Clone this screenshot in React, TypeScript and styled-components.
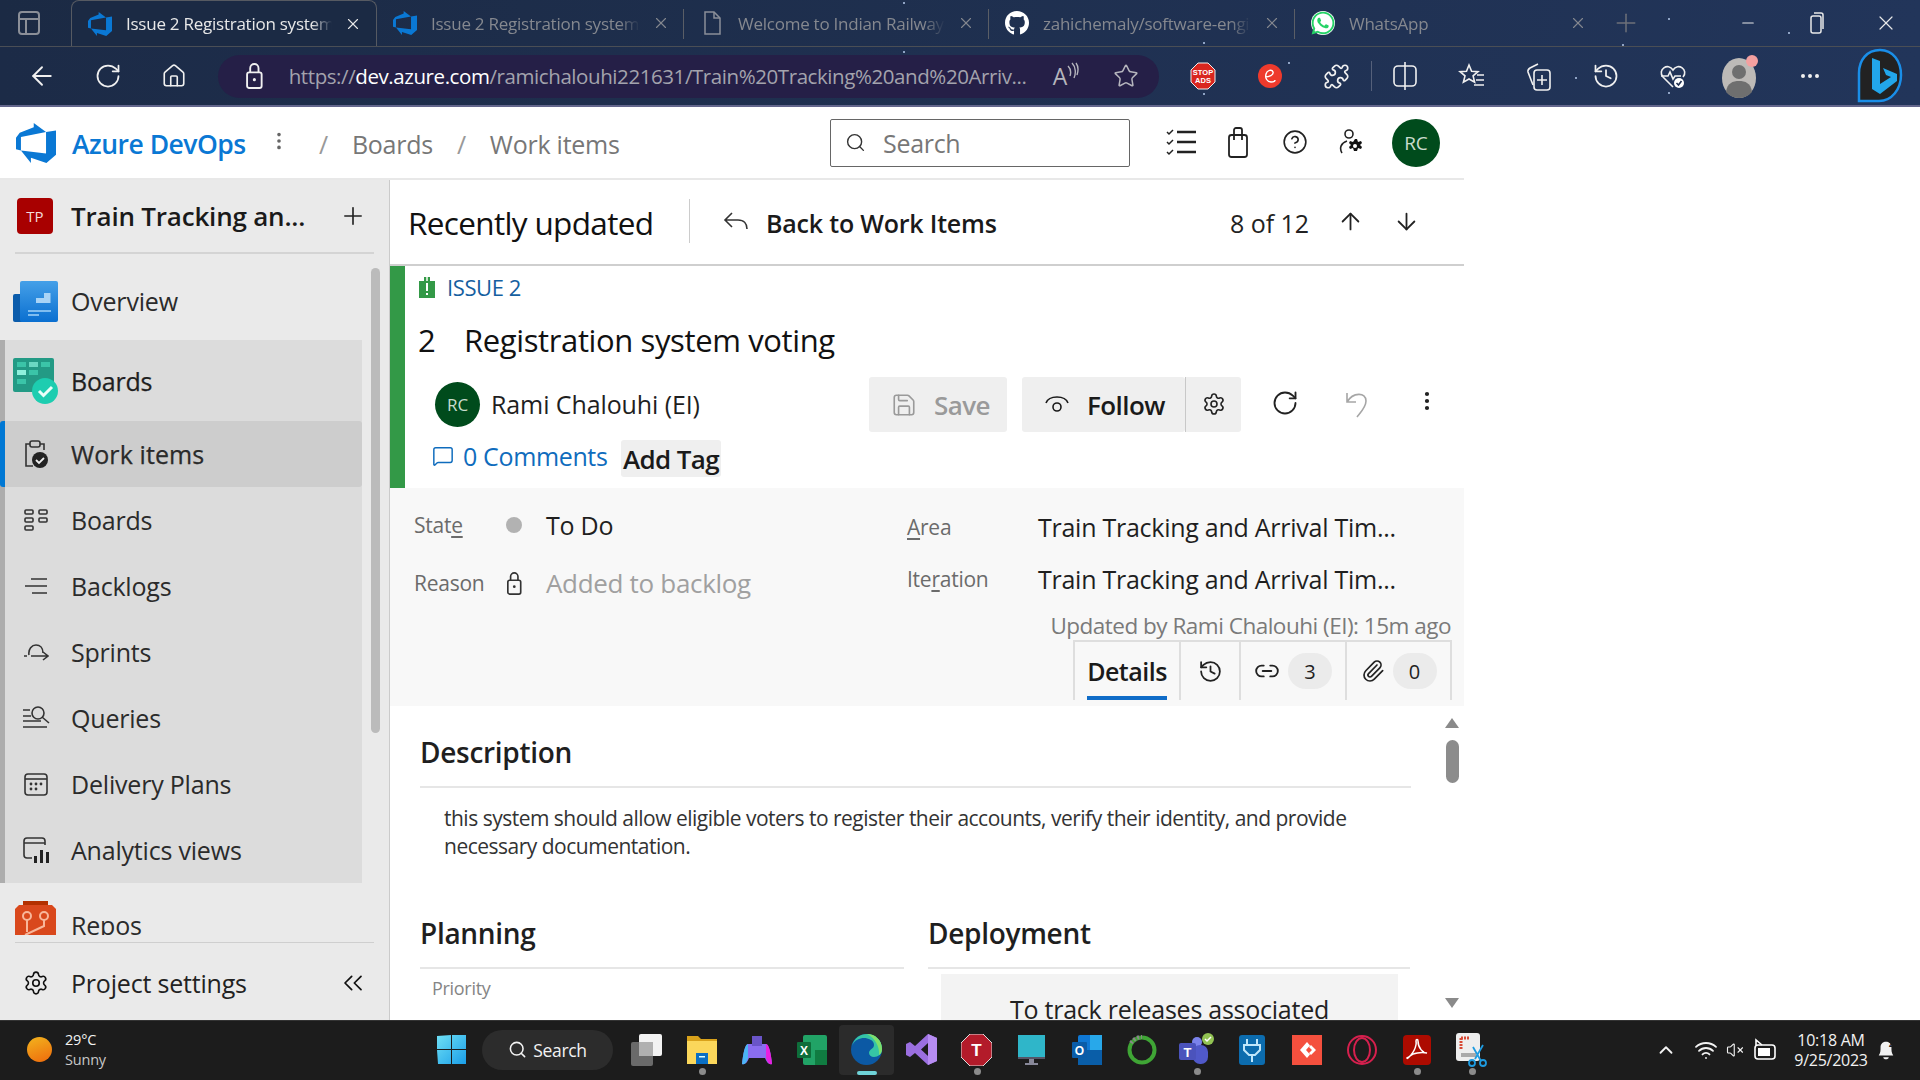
import styled, { createGlobalStyle } from "styled-components";
import {
  ArrowDown, ArrowLeft, ArrowUp, ChevronUp, ChevronsLeft, CircleHelp, Ellipsis, EllipsisVertical, History, Home,
  Link2, MessageSquare, Minus, Paperclip, Plus, Puzzle, RotateCw, Save, Search, Settings,
  Star, VolumeX, Wifi, X,
} from "lucide-react";
import { FaGithub, FaWhatsapp } from "react-icons/fa";

const FONT = `"Open Sans", "Noto Sans", sans-serif`;

const speck = (x: number, y: number) => `radial-gradient(circle 1.5px at ${x}px ${y}px, #8fa3c4 60%, transparent 100%)`;

const Global = createGlobalStyle`
  html, body { margin: 0; padding: 0; background: #fff; }
  body { font-family: ${FONT}; overflow: hidden; }
  * { box-sizing: border-box; }
`;

const Page = styled.div`
  width: 1920px;
  height: 1080px;
  display: flex;
  flex-direction: column;
  overflow: hidden;
`;

/* browser chrome */
const TabStrip = styled.div`
  height: 47px;
  display: flex;
  align-items: flex-end;
  background: ${[speck(904, 3), speck(1204, 43), speck(1623, 45), speck(1789, 33), speck(1669, 19)].join(",")}, linear-gradient(90deg, #1b2a44, #22355a);
  border-bottom: 1px solid #4a4e55;
  color: #e6e6e6;
`;
const TabLead = styled.div`
  width: 71px;
  height: 46px;
  display: flex;
  align-items: center;
  justify-content: center;
  padding-right: 14px;
  color: #8b8f98;
`;
const Tab = styled.div<{ $active?: boolean; $w: number; $sep?: boolean }>`
  width: ${(p) => p.$w}px;
  height: 46px;
  display: flex;
  align-items: center;
  padding: 0 14px 0 16px;
  position: relative;
  color: ${(p) => (p.$active ? "#e8e8e8" : "#85888f")};
  ${(p) => p.$active && "border: 1px solid #565a62; border-bottom: none; border-radius: 8px 8px 0 0; background: #1b2a44;"}
  ${(p) => p.$sep && "&::after { content: ''; position: absolute; right: 0; top: 9px; height: 30px; width: 1px; background: #5a5e66; }"}
`;
const TabIcon = styled.span`
  width: 24px;
  height: 28px;
  display: flex;
  align-items: center;
  justify-content: center;
  flex: none;
`;
const TabTitle = styled.span`
  flex: 1;
  margin: 0 12px 0 14px;
  font-size: 17px;
  white-space: nowrap;
  overflow: hidden;
  letter-spacing: -0.25px;
  mask-image: linear-gradient(to right, #000 90%, transparent);
`;
const NewTab = styled.div`
  width: 50px;
  height: 46px;
  display: flex;
  align-items: center;
  justify-content: center;
  color: #6d7079;
`;
const WindowButtons = styled.div`
  margin-left: auto;
  display: flex;
  color: #e8e8e8;
`;
const WindowButton = styled.div`
  width: 69px;
  height: 46px;
  display: flex;
  align-items: center;
  justify-content: center;
`;
const ToolBar = styled.div`
  height: 60px;
  display: flex;
  align-items: center;
  padding-left: 9px;
  background: ${[speck(904, 5), speck(1289, 16), speck(1576, 31), speck(1669, 46), speck(1204, 47)].join(",")}, linear-gradient(90deg, #1c2b47, #22355a);
  border-bottom: 2px solid #63668c;
  color: #f0f0f0;
`;
const ToolSlot = styled.div<{ $w?: number }>`
  width: ${(p) => p.$w ?? 66}px;
  height: 44px;
  flex: none;
  display: flex;
  align-items: center;
  justify-content: center;
`;
const Address = styled.div`
  width: 941px;
  height: 43px;
  margin: 0 10px 0 11px;
  display: flex;
  align-items: center;
  border-radius: 22px;
  background: #251f47;
  color: #a3a3ad;
  padding-left: 27px;
`;
const Url = styled.div`
  width: 741px;
  margin-left: 25px;
  font-size: 20.5px;
  letter-spacing: -0.42px;
  white-space: nowrap;
  overflow: hidden;
  b { font-weight: 400; color: #fff; }
`;
const ReadAloud = styled.span`
  width: 42px;
  margin-left: 23px;
  display: flex;
  align-items: flex-start;
  font-size: 23px;
  line-height: 28px;
  color: #b5b5bd;
`;
const AddressEnd = styled.div`
  width: 62px;
  display: flex;
  justify-content: center;
  color: #b5b5bd;
`;
const ToolSep = styled.div`
  width: 1px;
  height: 30px;
  background: #55607a;
  margin-left: 1px;
  margin-right: -1px;
`;

/* app header */
const AppFrame = styled.div`
  width: 1464px;
  height: 913px;
  display: flex;
  flex-direction: column;
  background: #fff;
`;
const AppHeader = styled.header`
  height: 73px;
  flex: none;
  display: flex;
  align-items: center;
  border-bottom: 2px solid #e8e8e8;
  padding: 0 24px 0 16px;
`;
const Brand = styled.div`
  margin: 2px 0 0 16px;
  font-size: 26.5px;
  font-weight: 600;
  color: #0a78d4;
  letter-spacing: -0.5px;
  width: 191px;
`;
const Dots = styled.div`
  width: 32px;
  display: flex;
  justify-content: center;
  color: #666;
  margin-bottom: 4px;
`;
const Crumb = styled.span<{ $sep?: boolean }>`
  font-size: 25px;
  letter-spacing: -0.25px;
  color: ${(p) => (p.$sep ? "#999" : "#777")};
  margin: 2px 0 0 24px;
`;
const SearchBox = styled.div`
  width: 300px;
  height: 48px;
  margin-left: auto;
  border: 1px solid #666;
  border-radius: 2px;
  display: flex;
  align-items: center;
  padding-left: 14px;
  color: #333;
  span { margin-left: 17px; padding-top: 1px; font-size: 25px; color: #777; letter-spacing: -0.3px; }
`;
const HeaderIcons = styled.div`
  display: flex;
  align-items: center;
  margin: 0 12px 2px 22px;
  color: #222;
`;
const HeaderSlot = styled.div`
  width: 57px;
  display: flex;
  justify-content: center;
`;
const Avatar = styled.div<{ $size: number; $font: number }>`
  width: ${(p) => p.$size}px;
  height: ${(p) => p.$size}px;
  border-radius: 50%;
  background: #004b1c;
  color: #c9dccd;
  font-size: ${(p) => p.$font}px;
  display: flex;
  align-items: center;
  justify-content: center;
  flex: none;
`;
const Body = styled.div`
  flex: 1;
  min-height: 0;
  display: flex;
`;

/* left nav */
const Sidebar = styled.aside`
  width: 390px;
  flex: none;
  position: relative;
  background: #eaeaea;
  border-right: 1px solid #cbcbcb;
  display: flex;
  flex-direction: column;
`;
const Project = styled.div`
  height: 72px;
  display: flex;
  align-items: center;
  padding: 0 22px 0 17px;
  flex: none;
`;
const ProjectBadge = styled.div`
  width: 36px;
  height: 36px;
  border-radius: 4px;
  background: #a80000;
  color: #f3dcdc;
  font-size: 15px;
  display: flex;
  align-items: center;
  justify-content: center;
`;
const ProjectName = styled.div`
  flex: 1;
  margin-left: 18px;
  font-size: 26px;
  font-weight: 600;
  letter-spacing: -0.2px;
  color: #1a1a1a;
`;
const NavRule = styled.div<{ $h: number; $gap?: number }>`
  height: ${(p) => p.$h}px;
  margin: ${(p) => p.$gap ?? 0}px 15px 0;
  background: ${(p) => (p.$h > 1 ? "#d4d4d4" : "#cfcfcf")};
  flex: none;
`;
const NavClip = styled.nav`
  height: 681px;
  flex: none;
  overflow: hidden;
`;
const NavRow = styled.div<{ $h: number; $pad?: number; $selected?: boolean; $inGroup?: boolean; $strong?: boolean }>`
  height: ${(p) => p.$h}px;
  display: flex;
  align-items: center;
  padding: ${(p) => p.$pad ?? 0}px 0 0 ${(p) => (p.$inGroup ? 8 : 13)}px;
  font-size: 25px;
  letter-spacing: -0.2px;
  color: #2b2b2b;
  ${(p) => p.$strong && "color:#1f1f1f; -webkit-text-stroke: 0.25px #1f1f1f;"}
  ${(p) => p.$selected && "background:#cdcdcd; border-left:5px solid #0078d4; margin-left:-5px; padding-left:8px; border-radius:3px; letter-spacing:0.1px; -webkit-text-stroke:0.25px #1f1f1f;"}
`;
const NavIcon = styled.span<{ $big?: boolean }>`
  width: 58px;
  flex: none;
  display: flex;
  justify-content: ${(p) => (p.$big ? "flex-start" : "center")};
  padding-right: ${(p) => (p.$big ? 0 : 13)}px;
  color: #333;
`;
const NavGroup = styled.div`
  width: 362px;
  background: #dcdcdc;
  border-left: 5px solid #adadad;
`;
const NavThumb = styled.div`
  position: absolute;
  left: 371px;
  top: 88px;
  width: 9px;
  height: 465px;
  background: #bbb;
  border-radius: 5px;
`;
const SettingsRow = styled(NavRow)`
  flex: 1;
  padding-right: 20px;
  padding-top: 2px;
  color: #222;
  span:nth-child(2) { flex: 1; }
`;

/* main */
const Main = styled.main`
  flex: 1;
  min-width: 0;
  display: flex;
  flex-direction: column;
`;
const TopRow = styled.div`
  height: 86px;
  flex: none;
  display: flex;
  align-items: center;
  padding: 0 44px 2px 18px;
  border-bottom: 2px solid #cfcfcf;
`;
const PageTitle = styled.div`
  font-size: 31.5px;
  letter-spacing: -0.66px;
  color: #111;
  width: 281px;
  padding-top: 2px;
`;
const VSep = styled.div`
  width: 1px;
  height: 44px;
  background: #ccc;
`;
const BackIcon = styled.span`
  margin-left: 33px;
  display: flex;
  color: #333;
`;
const BackText = styled.span`
  margin-left: 17px;
  font-size: 25px;
  font-weight: 600;
  letter-spacing: -0.2px;
  color: #1a1a1a;
  padding-top: 3px;
`;
const Pager = styled.div`
  margin-left: auto;
  display: flex;
  align-items: center;
  gap: 25px;
  color: #222;
  span { font-size: 25px; letter-spacing: -0.05px; margin-right: 3px; padding-top: 3px; }
  svg + svg { margin-left: 4px; }
`;
const WorkHead = styled.section`
  height: 222px;
  flex: none;
  border-left: 15px solid #339947;
  padding-left: 13px;
  display: flex;
  flex-direction: column;
`;
const TypeRow = styled.div`
  height: 44px;
  padding-bottom: 2px;
  display: flex;
  align-items: center;
  gap: 11px;
  font-size: 22px;
  letter-spacing: -0.4px;
  color: #15609f;
`;
const TitleRow = styled.div`
  height: 60px;
  display: flex;
  align-items: center;
  font-size: 31px;
  letter-spacing: -0.38px;
  color: #111;
  span:first-child { width: 46px; }
`;
const ActionRow = styled.div`
  height: 56px;
  margin-top: 6px;
  padding: 0 2px 0 17px;
  display: flex;
  align-items: center;
`;
const Person = styled.span`
  margin-left: 11px;
  font-size: 25px;
  letter-spacing: -0.1px;
  color: #1f1f1f;
  margin-right: auto;
`;
const ActionButton = styled.div<{ $w: number; $muted?: boolean; $gap?: number; $left?: number }>`
  width: ${(p) => p.$w}px;
  height: 55px;
  background: #efefef;
  border-radius: 3px;
  display: flex;
  align-items: center;
  font-size: 26px;
  font-weight: 600;
  letter-spacing: -0.55px;
  color: ${(p) => (p.$muted ? "#9a9a9a" : "#1a1a1a")};
  padding: 2px 0 0 ${(p) => p.$left ?? 22}px;
  gap: ${(p) => p.$gap ?? 17}px;
`;
const FollowGroup = styled.div`
  display: flex;
  margin-left: 15px;
`;
const SplitGear = styled.div`
  width: 56px;
  height: 55px;
  background: #efefef;
  border-left: 1px solid #c8c8c8;
  border-radius: 0 3px 3px 0;
  display: flex;
  align-items: center;
  justify-content: center;
  color: #222;
`;
const ActionIcon = styled.div<{ $muted?: boolean }>`
  width: 71px;
  display: flex;
  justify-content: center;
  color: ${(p) => (p.$muted ? "#a6a6a6" : "#222")};
`;
const ActionIcons = styled.div`
  display: flex;
  margin-left: 8px;
`;
const MetaRow = styled.div`
  height: 37px;
  margin: 8px 0 0 14px;
  display: flex;
  align-items: center;
`;
const Comments = styled.div`
  display: flex;
  align-items: center;
  gap: 9px;
  width: 189px;
  margin-bottom: 5px;
  font-size: 25px;
  letter-spacing: -0.36px;
  color: #0f6cbd;
`;
const AddTag = styled.div`
  width: 100px;
  height: 37px;
  background: #efefef;
  border-radius: 3px;
  font-size: 26px;
  font-weight: 600;
  letter-spacing: -0.65px;
  color: #1a1a1a;
  display: flex;
  align-items: center;
  justify-content: center;
  white-space: nowrap;
`;
const Fields = styled.section`
  height: 218px;
  flex: none;
  background: #f8f8f8;
  padding-top: 8px;
  display: flex;
  flex-direction: column;
`;
const FieldGrid = styled.div`
  display: flex;
  padding-left: 24px;
  height: 116px;
`;
const FieldColumn = styled.div<{ $w?: number; $row: number; $top?: number }>`
  width: ${(p) => (p.$w ? `${p.$w}px` : "auto")};
  padding-top: ${(p) => p.$top ?? 0}px;
  display: grid;
  grid-auto-rows: ${(p) => p.$row}px;
`;
const Field = styled.div`
  display: flex;
  align-items: center;
  white-space: nowrap;
`;
const FieldLabel = styled.span<{ $w: number }>`
  width: ${(p) => p.$w}px;
  font-size: 21px;
  letter-spacing: -0.25px;
  color: #6b6b6b;
  flex: none;
  u { text-underline-offset: 3px; }
`;
const Marker = styled.span`
  width: 44px;
  flex: none;
  display: flex;
  justify-content: center;
  margin-right: 10px;
  color: #333;
`;
const StateDot = styled.span`
  width: 16px;
  height: 16px;
  border-radius: 50%;
  background: #b2b2b2;
`;
const FieldValue = styled.span<{ $muted?: boolean }>`
  font-size: ${(p) => (p.$muted ? 26 : 25)}px;
  letter-spacing: ${(p) => (p.$muted ? -0.32 : -0.26)}px;
  color: ${(p) => (p.$muted ? "#a0a0a0" : "#1f1f1f")};
`;
const Updated = styled.div`
  height: 28px;
  margin-right: 13px;
  text-align: right;
  font-size: 22.5px;
  letter-spacing: -0.5px;
  line-height: 28px;
  color: #7a7a7a;
  white-space: nowrap;
`;
const TabBar = styled.div`
  height: 60px;
  margin: 0 12px 0 auto;
  display: flex;
  border-top: 2px solid #dedede;
  border-left: 2px solid #dedede;
`;
const DetailTab = styled.div<{ $w: number }>`
  width: ${(p) => p.$w}px;
  border-right: 2px solid #dedede;
  display: flex;
  align-items: center;
  justify-content: center;
  gap: 8px;
  color: #222;
`;
const DetailsLabel = styled.span`
  font-size: 25px;
  font-weight: 600;
  letter-spacing: -0.5px;
  color: #1a1a1a;
  border-bottom: 4px solid #0f6cc8;
  line-height: 46px;
  margin-top: 6px;
  height: 52px;
`;
const CountBadge = styled.span`
  width: 44px;
  height: 36px;
  border-radius: 18px;
  background: #ebebeb;
  font-size: 20px;
  display: flex;
  align-items: center;
  justify-content: center;
`;
const Lower = styled.section`
  flex: 1;
  min-height: 0;
  display: flex;
`;
const Scroller = styled.div`
  width: 1050px;
  padding: 31px 29px 0 30px;
  overflow: hidden;
`;
const SectionHead = styled.h2`
  margin: 0;
  height: 51px;
  line-height: 30px;
  font-size: 28px;
  font-weight: 600;
  letter-spacing: -0.3px;
  color: #1f1f1f;
  border-bottom: 2px solid #e6e6e6;
`;
const Paragraph = styled.p`
  margin: 16px 0 58px;
  padding-left: 24px;
  font-size: 21px;
  line-height: 28px;
  letter-spacing: -0.5px;
  color: #333;
`;
const Columns = styled.div`
  display: grid;
  grid-template-columns: 484px 482px;
  gap: 24px;
`;
const SmallLabel = styled.div`
  margin: 7px 0 0 12px;
  font-size: 18px;
  line-height: 24px;
  letter-spacing: -0.3px;
  color: #858585;
`;
const SmallValue = styled.div`
  margin: 12px 0 0 23px;
  font-size: 22px;
  color: #444;
`;
const ReleaseBox = styled.div`
  margin: 5px 12px 0 13px;
  height: 120px;
  background: #f3f3f3;
  padding: 19px 62px 0;
  text-align: center;
  font-size: 25px;
  line-height: 32px;
  letter-spacing: -0.25px;
  color: #222;
`;
const Rail = styled.div`
  width: 24px;
  padding: 12px 0;
  display: flex;
  flex-direction: column;
  align-items: center;
`;
const RailArrow = styled.span<{ $down?: boolean }>`
  width: 0;
  height: 0;
  border-left: 7px solid transparent;
  border-right: 7px solid transparent;
  ${(p) => (p.$down ? "border-top: 10px solid #8a8a8a; margin-top: auto;" : "border-bottom: 10px solid #8a8a8a;")}
`;
const RailThumb = styled.span`
  width: 13px;
  height: 43px;
  margin-top: 12px;
  border-radius: 7px;
  background: #8c8c8c;
`;

/* taskbar */
const Taskbar = styled.footer`
  height: 60px;
  flex: none;
  padding-bottom: 2px;
  background: #1c1c1c;
  border-top: 1px solid #333;
  display: flex;
  align-items: center;
  color: #f2f2f2;
`;
const Weather = styled.div`
  width: 421px;
  padding-left: 27px;
  display: flex;
  align-items: center;
  gap: 13px;
`;
const Sun = styled.span`
  width: 25px;
  height: 25px;
  border-radius: 50%;
  background: linear-gradient(160deg, #f2b41e, #ee6a0c);
`;
const WeatherText = styled.div`
  font-size: 14.5px;
  line-height: 20px;
  letter-spacing: -0.2px;
  div + div { color: #c8c8c8; }
`;
const StartSlot = styled.div`
  width: 61px;
  display: flex;
  justify-content: center;
`;
const TaskSearch = styled.div`
  width: 131px;
  height: 40px;
  margin-right: 6px;
  border-radius: 20px;
  background: #2c2c2c;
  display: flex;
  align-items: center;
  justify-content: center;
  gap: 6px;
  font-size: 17.5px;
  letter-spacing: -0.3px;
`;
const TaskSlot = styled.div<{ $open?: boolean; $active?: boolean }>`
  width: 55px;
  height: 50px;
  position: relative;
  display: flex;
  align-items: center;
  justify-content: center;
  border-radius: 4px;
  ${(p) => p.$active && "background:#2b2b2b;"}
  ${(p) => p.$open && `&::after { content:''; position:absolute; left:50%; bottom:0; margin-left:${p.$active ? -10 : -3}px; width:${p.$active ? 20 : 7}px; height:${p.$active ? 4 : 7}px; border-radius:4px; background:${p.$active ? "#6fd3d8" : "#8b8b8b"}; }`}
`;
const Tray = styled.div`
  margin-left: auto;
  display: flex;
  align-items: center;
  padding-right: 24px;
`;
const TraySlot = styled.div<{ $w: number }>`
  width: ${(p) => p.$w}px;
  display: flex;
  justify-content: center;
`;
const Clock = styled.div`
  width: 90px;
  text-align: center;
  font-size: 16px;
  line-height: 20px;
  letter-spacing: -0.25px;
  white-space: nowrap;
`;

/* drawings */
const AzureMark = ({ size }: { size: number }) => (
  <svg width={size} height={size} viewBox="0 0 24 24" fill="#0a78d4">
    <path d="M0 8.877L2.247 5.91l8.405-3.416V.022l7.37 5.393L2.966 8.338v8.225L0 15.707zm24-4.45v14.651l-5.753 4.9-9.303-3.057v3.056l-5.978-7.416 15.057 1.798V5.415z" />
  </svg>
);
const DocIcon = () => (
  <svg width="22" height="28" viewBox="0 0 22 28" fill="none" stroke="#8b8f98" strokeWidth="1.5">
    <path d="M4 3h9l6 6v16H4z" /><path d="M13 3v6h6" />
  </svg>
);
const StopBadge = () => (
  <svg width="26" height="28" viewBox="0 0 26 28">
    <path d="M8 1h10l7 7v12l-7 7H8l-7-7V8z" fill="#d9261f" stroke="#eee" strokeWidth="1" />
    <text x="13" y="13" fontSize="7.5" fontWeight="700" textAnchor="middle" fill="#fff" fontFamily="Liberation Sans">STOP</text>
    <text x="13" y="21" fontSize="7.5" fontWeight="700" textAnchor="middle" fill="#fff" fontFamily="Liberation Sans">ADS</text>
  </svg>
);
const RedE = () => (
  <svg width="26" height="28" viewBox="0 0 26 28">
    <circle cx="13" cy="14" r="12" fill="#ee3a2c" />
    <path d="M8 15c4 0 9-2 8-5s-6-2-7 2 1 8 5 8 4-2 4-2" fill="none" stroke="#fff" strokeWidth="1.4" />
  </svg>
);
const SplitIcon = () => (
  <svg width="26" height="30" viewBox="0 0 26 30" fill="none" stroke="currentColor" strokeWidth="1.6">
    <rect x="2" y="5" width="22" height="20" rx="4" /><path d="M13 1v28" />
  </svg>
);
const FavIcon = () => (
  <svg width="28" height="28" viewBox="0 0 28 28" fill="none" stroke="currentColor" strokeWidth="1.6">
    <path d="M11 3l2.6 6.2 6.4.5-4.9 4.2 1.5 6.3L11 17l-5.6 3.2 1.6-6.3L2 9.7l6.5-.5z" /><path d="M19 13h7M18 18h8M16 23h10" />
  </svg>
);
const CollectionsIcon = () => (
  <svg width="28" height="32" viewBox="0 0 28 32" fill="none" stroke="currentColor" strokeWidth="1.6">
    <path d="M8 25L3 12c-.5-2 .5-3 2-4l8-4" /><rect x="9" y="10" width="16" height="20" rx="3" /><path d="M17 15v10M12 20h10" />
  </svg>
);
const HealthIcon = () => (
  <svg width="28" height="28" viewBox="0 0 28 28" fill="none" stroke="currentColor" strokeWidth="1.6">
    <path d="M14 25L4 15c-6-7 5-15 10-7 5-8 16 0 10 7" /><path d="M2 14h7l2-4 3 7 2-3h6" /><circle cx="20" cy="21" r="5" fill="#fff" stroke="none" />
    <path d="M17.5 21l2 2 3-4" stroke="#1f2f50" />
  </svg>
);
const Profile = () => (
  <svg width="38" height="44" viewBox="0 0 38 44">
    <ellipse cx="17" cy="24" rx="17" ry="20" fill="#bdbab7" />
    <circle cx="17" cy="18" r="7" fill="#6f6f6f" />
    <path d="M4 38c1-9 7-11 13-11s12 2 13 11c-7 8-19 8-26 0z" fill="#6f6f6f" />
    <circle cx="30" cy="7" r="6" fill="#f4a0a0" />
  </svg>
);
const BingIcon = () => (
  <svg width="46" height="56" viewBox="0 0 46 56">
    <path d="M23 2C10 2 2 12 2 25v28h20c13 0 22-12 22-26S36 2 23 2z" fill="#222" stroke="#1a8ee8" strokeWidth="2.5" />
    <path d="M15 10l8 3v23l11-7-5-2-3-7 14 6v7L23 46l-8-5z" fill="#22a6ea" />
  </svg>
);
const WhatsIcon = () => (
  <span style={{ color: "#25d366", background: "#fff", borderRadius: "50%", width: 24, height: 24, display: "flex" }}>
    <FaWhatsapp size={26} style={{ margin: -1 }} />
  </span>
);
const TallLock = ({ h, color }: { h: number; color: string }) => (
  <svg width={h * 0.72} height={h} viewBox="0 0 18 25" fill="none" stroke={color} strokeWidth="1.8">
    <rect x="2" y="9" width="14" height="15" rx="2" /><path d="M5 9V5a4 4 0 0 1 8 0v4" /><circle cx="9" cy="16" r="1.500" fill={color} stroke="none" />
  </svg>
);
const WaveArcs = () => (
  <svg width="12" height="20" viewBox="0 0 12 20" fill="none" stroke="currentColor" strokeWidth="1.4">
    <path d="M1 4c3 3 3 7 2 10M5 1c4 4 4 11 2 15M9 1c3 4 2 9 1 12" />
  </svg>
);
const OverviewIcon = () => (
  <svg width="45" height="41" viewBox="0 0 45 41">
    <defs><linearGradient id="ov" x1="0" y1="0" x2="0" y2="1"><stop offset="0" stopColor="#45a0e8" /><stop offset="1" stopColor="#0a6fd0" /></linearGradient></defs>
    <rect y="13" width="12" height="28" rx="2" fill="#0b5cab" />
    <rect x="7" width="38" height="41" rx="2" fill="url(#ov)" />
    <path d="M15 22h8v-5h8v-5h6.500v-4v14z" fill="#a9d4f6" />
    <rect x="15" y="29" width="23" height="2" fill="#7fbdf0" /><rect x="15" y="33" width="11" height="2" fill="#7fbdf0" />
  </svg>
);
const BoardsBig = () => (
  <svg width="45" height="46" viewBox="0 0 45 46">
    <rect width="41" height="34" rx="2" fill="#239a85" />
    <rect x="4" y="4" width="9" height="5" fill="#3bc4a8" /><rect x="16" y="4" width="9" height="5" fill="#6ad8c2" /><rect x="28" y="4" width="9" height="5" fill="#3bc4a8" />
    <rect x="4" y="12" width="9" height="5" fill="#8ff0dc" /><rect x="16" y="12" width="9" height="5" fill="#3bc4a8" />
    <rect x="4" y="21" width="9" height="5" fill="#3bc4a8" />
    <circle cx="32" cy="33" r="13" fill="#1dcdb0" />
    <path d="M26 33l4.500 4.500L39 29" fill="none" stroke="#e9fff9" strokeWidth="3" />
  </svg>
);
const ReposIcon = () => (
  <svg width="43" height="48" viewBox="-2 0 43 48">
    <path d="M8 0h25v4h4l4 4v40H0V8l4-4h4z" fill="#d9481c" />
    <path d="M8 0h25v4H8z" fill="#b33000" />
    <g fill="none" stroke="#f8b69a" strokeWidth="2"><circle cx="12" cy="15" r="4" /><circle cx="29" cy="15" r="4" /><path d="M12 19v12M10 34l19-9v-6" /></g>
  </svg>
);
const line = { fill: "none", stroke: "currentColor", strokeWidth: 1.6 };
const WorkItemsIcon = () => (
  <svg width="26" height="28" viewBox="0 0 26 28">
    <path d="M7 4H3v22h7M17 4h4v6" {...line} /><rect x="7" y="1" width="10" height="6" rx="2" {...line} />
    <circle cx="17" cy="20" r="8" fill="#222" /><path d="M13 20l3 3 5-5" fill="none" stroke="#eee" strokeWidth="1.8" />
  </svg>
);
const BoardsSmall = () => (
  <svg width="24" height="22" viewBox="0 0 24 22" {...line}>
    <rect x="1" y="1" width="8" height="4" rx="1" /><rect x="1" y="9" width="8" height="4" rx="1" /><rect x="1" y="17" width="8" height="4" rx="1" />
    <rect x="15" y="1" width="8" height="4" rx="1" /><rect x="15" y="9" width="8" height="4" rx="1" />
  </svg>
);
const BacklogIcon = () => (
  <svg width="24" height="18" viewBox="0 0 24 18" {...line}><path d="M7 2h16M1 9h22M8 16h15" /></svg>
);
const SprintIcon = () => (
  <svg width="26" height="18" viewBox="0 0 26 18" {...line}>
    <path d="M6 12C5 6 9 2 13 2s7 3 7 8M1 13h3M8 13h16M20 9l5 4-5 4" />
  </svg>
);
const QueryIcon = () => (
  <svg width="28" height="24" viewBox="0 0 28 24" {...line}>
    <path d="M1 4h7M1 10h8M1 15h18M1 21h24" /><circle cx="16" cy="7" r="6" /><path d="M20 11l7 6" />
  </svg>
);
const PlanIcon = () => (
  <svg width="24" height="24" viewBox="0 0 24 24" {...line}>
    <rect x="1" y="2" width="22" height="21" rx="3" /><path d="M1 7h22" />
    <g fill="currentColor" stroke="none"><circle cx="7" cy="12" r="1.400" /><circle cx="12" cy="12" r="1.400" /><circle cx="17" cy="12" r="1.400" /><circle cx="7" cy="17" r="1.400" /><circle cx="12" cy="17" r="1.400" /></g>
  </svg>
);
const AnalyticsIcon = () => (
  <svg width="28" height="26" viewBox="0 0 28 26">
    <path d="M10 21H5a3 3 0 0 1-3-3V4a3 3 0 0 1 3-3h15a3 3 0 0 1 3 3v4M2 6h21" {...line} />
    <g fill="#222"><rect x="12" y="19" width="3" height="7" /><rect x="18" y="13" width="3" height="13" /><rect x="24" y="15" width="3" height="11" /></g>
  </svg>
);
const TaskListIcon = () => (
  <svg width="32" height="28" viewBox="0 0 32 28" fill="none" stroke="currentColor" strokeWidth="2">
    <path d="M12 4h19M12 14h19M12 24h19" strokeWidth="2.400" /><path d="M2 4l2 2 4-4M2 14l2 2 4-4M2 24l2 2 4-4" strokeWidth="1.500" />
  </svg>
);
const MarketBag = () => (
  <svg width="22" height="32" viewBox="0 0 22 32" fill="none" stroke="currentColor" strokeWidth="1.800">
    <rect x="2" y="9" width="18" height="22" rx="2.500" /><path d="M7 14V4a2 2 0 0 1 2-2h4a2 2 0 0 1 2 2v10" />
  </svg>
);
const AdminGear = () => (
  <svg width="26" height="28" viewBox="0 0 26 28">
    <circle cx="10" cy="6" r="4" {...line} /><path d="M8 13C2 15 0 20 3 25" {...line} />
    <path d="M16 11l2 0 1 3 3-1 1 2-2 2 2 2-1 2-3-1-1 3h-3l-1-3-3 1-1-2 2-2-2-2 1-2 3 1z" fill="#111" />
    <circle cx="16" cy="18" r="2" fill="#fff" />
  </svg>
);
const BackArrow = () => (
  <svg width="26" height="22" viewBox="0 0 26 22" {...line}><path d="M9 3L2 10l7 7M2 10h13c6 0 9 4 9 9" /></svg>
);
const UndoHook = () => (
  <svg width="24" height="30" viewBox="0 0 24 30" {...line}><path d="M3 4v9h9M3 13C9 3 22 3 22 12c0 6-5 11-9 16" /></svg>
);
const IssueGlyph = () => (
  <svg width="18" height="22" viewBox="0 0 18 22">
    <path d="M6 5V1h6v4h5v17H1V5z" fill="#339947" />
    <path d="M9 7v8M9 17v2" stroke="#fff" strokeWidth="2" /><path d="M8 1h2v4H8z" fill="#c8e6c9" />
  </svg>
);
const EyeIcon = () => (
  <svg width="24" height="22" viewBox="0 0 24 22" {...line}>
    <path d="M1 9c3-8 19-8 22 0" /><circle cx="12" cy="13" r="4" />
  </svg>
);

const WinLogo = () => (
  <svg width="29" height="29" viewBox="0 0 29 29">
    <defs><linearGradient id="win" x1="0" y1="0" x2="1" y2="1"><stop offset="0" stopColor="#6fe0f5" /><stop offset="1" stopColor="#1a9ee8" /></linearGradient></defs>
    <path d="M0 1l14-1v14H0zM15 0l14 0v14H15zM0 15h14v14H1zM15 15h14v14H15z" fill="url(#win)" />
  </svg>
);
const TaskIcons = [
  <svg key="tv" width="31" height="32" viewBox="0 0 31 32"><rect y="8" width="22" height="24" rx="2" fill="#6a6a6a" /><rect x="8" width="23" height="22" rx="2" fill="#f2f2f2" /><rect x="8" y="8" width="14" height="14" fill="#b0b0b0" /></svg>,
  <svg key="ex" width="30" height="28" viewBox="0 0 30 28"><path d="M0 0h11l3 3h16v25H0z" fill="#d9a21b" /><rect y="5" width="30" height="23" fill="#fbd75b" /><rect x="9" y="17" width="12" height="11" fill="#0a6fc4" /><rect x="12" y="20" width="6" height="1.500" fill="#dff" /></svg>,
  <svg key="gm" width="30" height="30" viewBox="0 0 30 30"><path d="M6 9h18c3 0 5 10 6 20-3 1-5-1-7-6H7c-2 5-4 7-7 6C1 19 3 9 6 9z" fill="#8a6df0" /><path d="M0 29C1 19 3 9 6 9v14c-2 5-3 7-6 6z" fill="#4ab6f5" /><path d="M30 29C29 19 27 9 24 9v14c2 5 3 7 6 6z" fill="#e91ee0" /><rect x="10" y="1" width="10" height="10" fill="#6a55c8" /></svg>,
  <svg key="xl" width="30" height="30" viewBox="0 0 30 30"><rect x="6" width="24" height="30" rx="2" fill="#21a366" /><rect x="18" y="15" width="12" height="15" fill="#107c41" /><rect y="7" width="14" height="16" rx="1" fill="#0e6e3a" /><text x="7" y="20" fontSize="12" fontWeight="700" fill="#fff" textAnchor="middle" fontFamily="Liberation Sans">X</text></svg>,
  <svg key="ed" width="31" height="31" viewBox="0 0 31 31"><circle cx="15.500" cy="15.500" r="15.500" fill="#0c59a4" /><path d="M1 12C3 4 9 0 16 0c8 0 15 6 15 15 0 5-4 8-8 8-3 0-5-2-5-4 0-4 5-4 5-8 0-5-6-7-10-7S3 6 1 12z" fill="#36c5a5" /><path d="M16 0c8 0 15 6 15 15 0 3-1 5-3 6 1-8-4-17-12-21z" fill="#7ee06c" /></svg>,
  <svg key="vs" width="31" height="31" viewBox="0 0 31 31"><path d="M22 0l9 4v23l-9 4-13-12-5 4-4-2V10l4-2 5 4zM22 9l-7 6.500 7 6.500z" fill="#9b6fe0" /><path d="M22 0l9 4v23l-9 4z" fill="#b78cf2" /></svg>,
  <svg key="st" width="31" height="32" viewBox="0 0 31 32"><path d="M9 0h13l9 9v14l-9 9H9l-9-9V9z" fill="#b31b2a" stroke="#ddd" strokeWidth="1" /><text x="15.500" y="22" fontSize="17" fontWeight="700" fill="#fff" textAnchor="middle" fontFamily="Liberation Sans">T</text></svg>,
  <svg key="mn" width="27" height="30" viewBox="0 0 27 30"><rect width="27" height="22" fill="#2fb6c9" /><rect y="22" width="27" height="2" fill="#556" /><rect x="11" y="24" width="5" height="4" fill="#889" /><rect x="7" y="28" width="13" height="2" fill="#889" /></svg>,
  <svg key="ol" width="30" height="30" viewBox="0 0 30 30"><rect x="6" width="24" height="30" rx="2" fill="#0f78d4" /><rect x="18" width="12" height="15" fill="#28a8ea" /><path d="M6 15l24 0v15H6z" fill="#0a5ea8" /><rect y="7" width="15" height="16" rx="1" fill="#0a5ca8" /><text x="7.500" y="20" fontSize="12" fontWeight="700" fill="#fff" textAnchor="middle" fontFamily="Liberation Sans">O</text></svg>,
  <svg key="gr" width="30" height="30" viewBox="0 0 30 30"><circle cx="15" cy="15" r="12.500" fill="none" stroke="#3fa535" strokeWidth="4" /><path d="M4 8A13 13 0 0 1 15 2" fill="none" stroke="#888" strokeWidth="4" strokeDasharray="2 2" /></svg>,
  <svg key="tm" width="35" height="34" viewBox="0 0 35 34"><circle cx="18" cy="9" r="5" fill="#7b83eb" /><rect x="14" y="12" width="15" height="19" rx="7" fill="#5059c9" /><rect y="10" width="17" height="17" rx="2" fill="#4b53bc" /><text x="8.500" y="24" fontSize="13" fontWeight="700" fill="#fff" textAnchor="middle" fontFamily="Liberation Sans">T</text><circle cx="29" cy="6" r="6" fill="#92c353" /><path d="M26 6l2 2 4-4" stroke="#fff" fill="none" strokeWidth="1.500" /></svg>,
  <svg key="pl" width="26" height="30" viewBox="0 0 26 30"><rect width="26" height="30" rx="3" fill="#0c6cae" /><path d="M8 4v6M18 4v6M5 10h16v5l-5 5h-6l-5-5zM13 20v7" stroke="#bfe6fa" strokeWidth="2" fill="none" /></svg>,
  <svg key="an" width="30" height="30" viewBox="0 0 30 30"><rect width="30" height="30" fill="#f4503e" /><path d="M15 7l-7 8 7 8 3-3.500-4-4.500 4-4.500zM19 10l-2 2 3 3-3 3 2 2 5-5z" fill="#fff" /></svg>,
  <svg key="op" width="30" height="30" viewBox="0 0 30 30" fill="none" stroke="#d6204e" strokeWidth="2"><circle cx="15" cy="15" r="14" /><ellipse cx="15" cy="15" rx="8" ry="12" /></svg>,
  <svg key="pd" width="28" height="30" viewBox="0 0 28 30"><rect width="28" height="30" rx="4" fill="#ad0b00" /><path d="M4 23c6-3 10-12 9-17 0-2 2-2 2 0 0 7 5 12 9 12-6-1-14 0-17 3-2 2-3 3-3 2z" fill="none" stroke="#fff" strokeWidth="1.500" /></svg>,
  <svg key="sn" width="31" height="34" viewBox="0 0 31 34"><rect width="24" height="28" rx="3" fill="#eee" /><path d="M5 5h9M5 5v11" stroke="#d84a35" strokeWidth="3" strokeDasharray="2 1" /><path d="M5 20h15v4H5z" fill="#aaa" /><path d="M19 26l8-14M17 14l8 14" stroke="#1e9be0" strokeWidth="1.800" /><circle cx="16" cy="30" r="3" fill="none" stroke="#1e9be0" strokeWidth="1.800" /><circle cx="27" cy="30" r="3" fill="none" stroke="#1e9be0" strokeWidth="1.800" /></svg>,
];
const RUNNING = [1, 4, 6, 10, 14, 15];

const subNav = [
  { label: "Boards", icon: <BoardsSmall /> },
  { label: "Backlogs", icon: <BacklogIcon /> },
  { label: "Sprints", icon: <SprintIcon /> },
  { label: "Queries", icon: <QueryIcon /> },
  { label: "Delivery Plans", icon: <PlanIcon /> },
  { label: "Analytics views", icon: <AnalyticsIcon /> },
];

export default function App() {
  return (
    <Page>
      <Global />
      <TabStrip>
        <TabLead>
          <svg width="22" height="26" viewBox="0 0 22 26" fill="none" stroke="currentColor" strokeWidth="2"><rect x="1" y="2" width="20" height="22" rx="3" /><path d="M1 9h20M8 9v15" /></svg>
        </TabLead>
        <Tab $active $w={306}>
          <TabIcon><AzureMark size={26} /></TabIcon>
          <TabTitle>Issue 2 Registration system voting</TabTitle>
          <X size={18} strokeWidth={1.5} />
        </Tab>
        <Tab $w={307} $sep>
          <TabIcon><AzureMark size={26} /></TabIcon>
          <TabTitle>Issue 2 Registration system voting</TabTitle>
          <X size={18} strokeWidth={1.5} />
        </Tab>
        <Tab $w={305} $sep>
          <TabIcon><DocIcon /></TabIcon>
          <TabTitle>Welcome to Indian Railways</TabTitle>
          <X size={18} strokeWidth={1.5} />
        </Tab>
        <Tab $w={306} $sep>
          <TabIcon><FaGithub size={26} color="#fff" /></TabIcon>
          <TabTitle>zahichemaly/software-engineering</TabTitle>
          <X size={18} strokeWidth={1.5} />
        </Tab>
        <Tab $w={306}>
          <TabIcon><WhatsIcon /></TabIcon>
          <TabTitle>WhatsApp</TabTitle>
          <X size={18} strokeWidth={1.5} />
        </Tab>
        <NewTab><Plus size={30} strokeWidth={1.2} /></NewTab>
        <WindowButtons>
          <WindowButton><Minus size={18} strokeWidth={1.5} /></WindowButton>
          <WindowButton>
            <svg width="14" height="22" viewBox="0 0 14 22" fill="none" stroke="currentColor" strokeWidth="1.500"><rect x="1" y="4" width="10" height="17" rx="2" /><path d="M4 1h7a2 2 0 0 1 2 2v14" /></svg>
          </WindowButton>
          <WindowButton><X size={24} strokeWidth={1.2} /></WindowButton>
        </WindowButtons>
      </TabStrip>
      <ToolBar>
        <ToolSlot><ArrowLeft size={30} strokeWidth={1.5} /></ToolSlot>
        <ToolSlot><RotateCw size={28} strokeWidth={1.5} /></ToolSlot>
        <ToolSlot><Home size={26} strokeWidth={1.5} /></ToolSlot>
        <Address>
          <TallLock h={26} color="#f0f0f0" />
          <Url>https://<b>dev.azure.com</b>/ramichalouhi221631/Train%20Tracking%20and%20Arriv...</Url>
          <ReadAloud>A<WaveArcs /></ReadAloud>
          <AddressEnd><Star size={26} strokeWidth={1.4} /></AddressEnd>
        </Address>
        <ToolSlot $w={67}><StopBadge /></ToolSlot>
        <ToolSlot $w={67}><RedE /></ToolSlot>
        <ToolSlot $w={67}><Puzzle size={27} strokeWidth={1.5} /></ToolSlot>
        <ToolSep />
        <ToolSlot $w={67}><SplitIcon /></ToolSlot>
        <ToolSlot $w={67}><FavIcon /></ToolSlot>
        <ToolSlot $w={67}><CollectionsIcon /></ToolSlot>
        <ToolSlot $w={67}><History size={28} strokeWidth={1.5} /></ToolSlot>
        <ToolSlot $w={67}><HealthIcon /></ToolSlot>
        <ToolSlot $w={70}><Profile /></ToolSlot>
        <ToolSlot $w={67}><Ellipsis size={24} /></ToolSlot>
        <ToolSlot $w={73}><BingIcon /></ToolSlot>
      </ToolBar>
      <AppFrame>
        <AppHeader>
          <AzureMark size={40} />
          <Brand>Azure DevOps</Brand>
          <Dots><EllipsisVertical size={22} strokeWidth={2} /></Dots>
          <Crumb $sep>/</Crumb>
          <Crumb>Boards</Crumb>
          <Crumb $sep>/</Crumb>
          <Crumb>Work items</Crumb>
          <SearchBox>
            <Search size={21} strokeWidth={1.6} />
            <span>Search</span>
          </SearchBox>
          <HeaderIcons>
            <HeaderSlot><TaskListIcon /></HeaderSlot>
            <HeaderSlot><MarketBag /></HeaderSlot>
            <HeaderSlot><CircleHelp size={26} strokeWidth={1.5} /></HeaderSlot>
            <HeaderSlot><AdminGear /></HeaderSlot>
          </HeaderIcons>
          <Avatar $size={48} $font={19}>RC</Avatar>
        </AppHeader>
        <Body>
          <Sidebar>
            <Project>
              <ProjectBadge>TP</ProjectBadge>
              <ProjectName>Train Tracking an...</ProjectName>
              <Plus size={28} strokeWidth={1.4} color="#222" />
            </Project>
            <NavRule $h={2} />
            <NavClip>
              <NavRow $h={86} $pad={8}><NavIcon $big><OverviewIcon /></NavIcon>Overview</NavRow>
              <NavGroup>
                <NavRow $h={81} $inGroup $strong><NavIcon $big><BoardsBig /></NavIcon>Boards</NavRow>
                <NavRow $h={66} $inGroup $selected><NavIcon><WorkItemsIcon /></NavIcon>Work items</NavRow>
                {subNav.map((item) => (
                  <NavRow key={item.label} $h={66} $inGroup><NavIcon>{item.icon}</NavIcon>{item.label}</NavRow>
                ))}
              </NavGroup>
              <NavRow $h={66} $pad={18}><NavIcon $big><ReposIcon /></NavIcon>Repos</NavRow>
            </NavClip>
            <NavRule $h={1} $gap={7} />
            <SettingsRow $h={78}>
              <NavIcon><Settings size={26} strokeWidth={1.5} color="#111" /></NavIcon>
              <span>Project settings</span>
              <ChevronsLeft size={32} strokeWidth={1.3} color="#111" />
            </SettingsRow>
            <NavThumb />
          </Sidebar>
          <Main>
            <TopRow>
              <PageTitle>Recently updated</PageTitle>
              <VSep />
              <BackIcon><BackArrow /></BackIcon>
              <BackText>Back to Work Items</BackText>
              <Pager>
                <span>8 of 12</span>
                <ArrowUp size={27} strokeWidth={1.6} />
                <ArrowDown size={27} strokeWidth={1.6} />
              </Pager>
            </TopRow>
            <WorkHead>
              <TypeRow><IssueGlyph />ISSUE 2</TypeRow>
              <TitleRow><span>2</span><span>Registration system voting</span></TitleRow>
              <ActionRow>
                <Avatar $size={45} $font={17}>RC</Avatar>
                <Person>Rami Chalouhi (EI)</Person>
                <ActionButton $w={138} $muted><Save size={26} strokeWidth={1.5} />Save</ActionButton>
                <FollowGroup>
                  <ActionButton $w={163} $left={23} $gap={18}><EyeIcon />Follow</ActionButton>
                  <SplitGear><Settings size={24} strokeWidth={1.6} /></SplitGear>
                </FollowGroup>
                <ActionIcons>
                  <ActionIcon><RotateCw size={28} strokeWidth={1.6} /></ActionIcon>
                  <ActionIcon $muted><UndoHook /></ActionIcon>
                  <ActionIcon><EllipsisVertical size={24} strokeWidth={2.2} /></ActionIcon>
                </ActionIcons>
              </ActionRow>
              <MetaRow>
                <Comments><MessageSquare size={22} strokeWidth={1.6} />0 Comments</Comments>
                <AddTag>Add Tag</AddTag>
              </MetaRow>
            </WorkHead>
            <Fields>
              <FieldGrid>
                <FieldColumn $w={493} $row={58}>
                  <Field>
                    <FieldLabel $w={78}>Stat<u>e</u></FieldLabel>
                    <Marker><StateDot /></Marker>
                    <FieldValue>To Do</FieldValue>
                  </Field>
                  <Field>
                    <FieldLabel $w={78}>Reason</FieldLabel>
                    <Marker><TallLock h={23} color="#333" /></Marker>
                    <FieldValue $muted>Added to backlog</FieldValue>
                  </Field>
                </FieldColumn>
                <FieldColumn $row={52} $top={5}>
                  <Field>
                    <FieldLabel $w={131}><u>A</u>rea</FieldLabel>
                    <FieldValue>Train Tracking and Arrival Tim...</FieldValue>
                  </Field>
                  <Field>
                    <FieldLabel $w={131}>Ite<u>r</u>ation</FieldLabel>
                    <FieldValue>Train Tracking and Arrival Tim...</FieldValue>
                  </Field>
                </FieldColumn>
              </FieldGrid>
              <Updated>Updated by Rami Chalouhi (EI): 15m ago</Updated>
              <TabBar>
                <DetailTab $w={106}><DetailsLabel>Details</DetailsLabel></DetailTab>
                <DetailTab $w={60}><History size={25} strokeWidth={1.7} /></DetailTab>
                <DetailTab $w={106}><Link2 size={26} strokeWidth={1.7} /><CountBadge>3</CountBadge></DetailTab>
                <DetailTab $w={105}><Paperclip size={24} strokeWidth={1.7} /><CountBadge>0</CountBadge></DetailTab>
              </TabBar>
            </Fields>
            <Lower>
              <Scroller>
                <SectionHead>Description</SectionHead>
                <Paragraph>
                  this system should allow eligible voters to register their accounts, verify their identity, and provide necessary documentation.
                </Paragraph>
                <Columns>
                  <div>
                    <SectionHead>Planning</SectionHead>
                    <SmallLabel>Priority</SmallLabel>
                    <SmallValue>2</SmallValue>
                  </div>
                  <div>
                    <SectionHead>Deployment</SectionHead>
                    <ReleaseBox>To track releases associated with this work item</ReleaseBox>
                  </div>
                </Columns>
              </Scroller>
              <Rail>
                <RailArrow />
                <RailThumb />
                <RailArrow $down />
              </Rail>
            </Lower>
          </Main>
        </Body>
      </AppFrame>
      <Taskbar>
        <Weather>
          <Sun />
          <WeatherText><div>29°C</div><div>Sunny</div></WeatherText>
        </Weather>
        <StartSlot><WinLogo /></StartSlot>
        <TaskSearch><Search size={19} strokeWidth={2} />Search</TaskSearch>
        {TaskIcons.map((icon, i) => (
          <TaskSlot key={icon.key} $open={RUNNING.includes(i)} $active={i === 4}>{icon}</TaskSlot>
        ))}
        <Tray>
          <TraySlot $w={40}><ChevronUp size={22} strokeWidth={2} /></TraySlot>
          <TraySlot $w={40}><Wifi size={24} strokeWidth={1.8} /></TraySlot>
          <TraySlot $w={18}><VolumeX size={22} strokeWidth={1.5} /></TraySlot>
          <TraySlot $w={42}>
            <svg width="24" height="24" viewBox="0 0 24 24" fill="none" stroke="#fff" strokeWidth="1.600"><rect x="2" y="7" width="20" height="14" rx="3" /><path d="M3 7V2l6 5" /><rect x="5" y="10" width="12" height="8" fill="#fff" stroke="none" /></svg>
          </TraySlot>
          <Clock><div>10:18 AM</div><div>9/25/2023</div></Clock>
          <TraySlot $w={20}>
            <svg width="22" height="28" viewBox="0 0 22 28" fill="#f2f2f2"><path d="M3 20c2-3 2-5 2-9s3-6 6-6 6 2 6 6 0 6 2 9zM8 22h6c0 3-6 3-6 0z" /><text x="14" y="11" fontSize="10" fontWeight="700" fontFamily="Liberation Sans" fill="#1c1c1c">z</text></svg>
          </TraySlot>
        </Tray>
      </Taskbar>
    </Page>
  );
}
